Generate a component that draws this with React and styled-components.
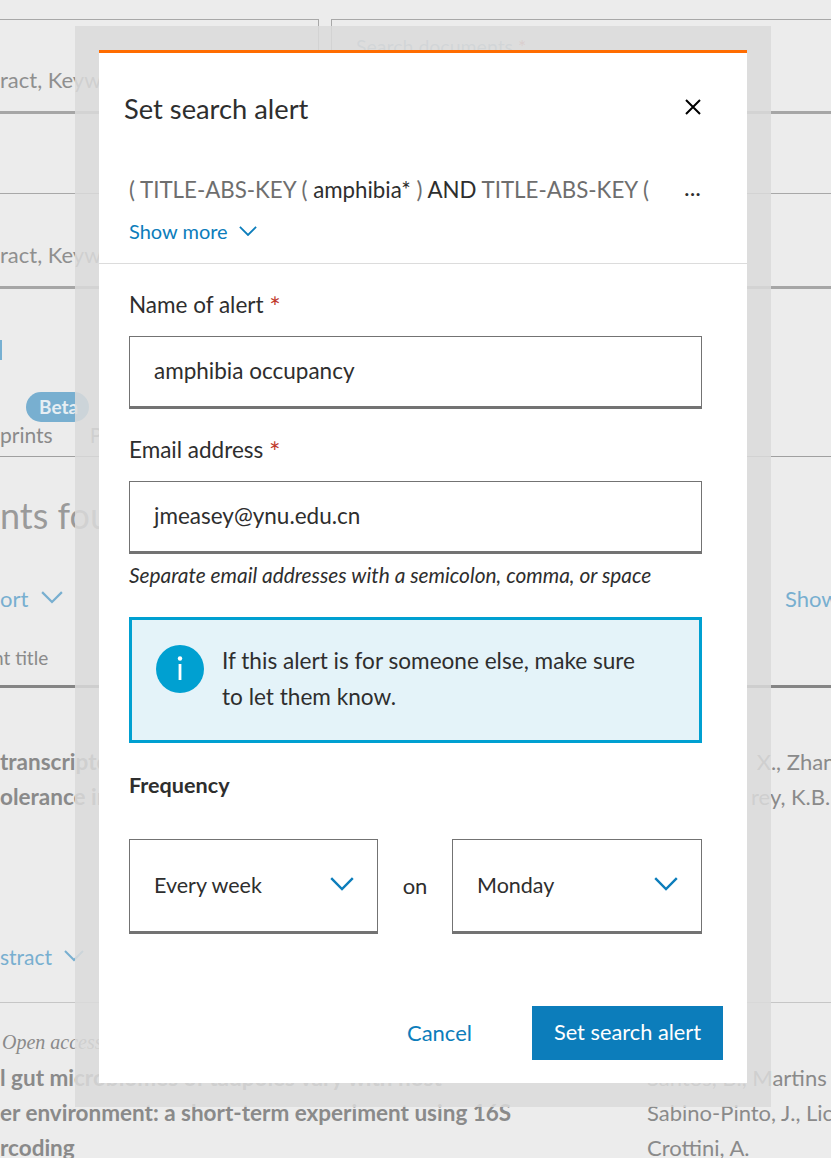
import React from 'react';
import styled, { createGlobalStyle } from 'styled-components';

const GlobalStyle = createGlobalStyle`
  html, body {
    margin: 0;
    padding: 0;
    background: #ececec;
  }
  * {
    box-sizing: border-box;
  }
`;

const Page = styled.div`
  position: relative;
  width: 831px;
  height: 1158px;
  overflow: hidden;
  background: #ececec;
  font-family: Lato, "Noto Sans", sans-serif;
  color: #8a8a8a;
`;

/* page behind the dialog */
const Background = styled.div`
  display: flex;
  flex-direction: column;
  padding-top: 19px;
`;

const SearchRow = styled.div`
  display: flex;
  gap: 12px;
  height: ${p => p.$height}px;
  margin-bottom: ${p => p.$after}px;
`;

const SearchField = styled.div`
  flex: ${p => (p.$wide ? '1' : '0 0 319px')};
  display: flex;
  flex-direction: column;
  justify-content: ${p => (p.$wide ? 'flex-start' : 'flex-end')};
  padding: ${p => (p.$wide ? '15px 0 0 24px' : '0 0 18px')};
  border-top: 1px solid #a8a8a8;
  border-bottom: 3px solid #a6a6a6;
  border-right: ${p => (p.$wide ? '0' : '1px solid #a8a8a8')};
  border-left: ${p => (p.$wide ? '1px solid #a8a8a8' : '0')};
  font-size: ${p => (p.$wide ? 19.5 : 22)}px;
  color: ${p => (p.$wide ? '#9fb6c4' : '#8f8f8f')};
  white-space: nowrap;
`;

const Required = styled.span`
  color: #d28a8a;
`;

const BlueStub = styled.div`
  width: 2px;
  height: 20px;
  margin-bottom: 32px;
  background: #77b0d2;
`;

const TabRow = styled.div`
  display: flex;
  height: 65px;
  border-bottom: 1px solid #a0a0a0;
  position: relative;
  padding: 30px 0 0;
  font-size: 21px;
  gap: 37px;
  margin-bottom: 34px;
`;

const BetaPill = styled.span`
  position: absolute;
  left: 26px;
  top: 0;
  width: 63px;
  height: 30px;
  border-radius: 15px;
  background: #78afd0;
  color: #e6eef3;
  font-size: 19px;
  font-weight: 700;
  line-height: 30px;
  padding-left: 13px;
`;

const ResultsHeading = styled.div`
  font-size: 36px;
  line-height: 48px;
  color: #9a9a9a;
  margin-bottom: 41px;
`;

const ActionRow = styled.div`
  display: flex;
  justify-content: space-between;
  align-items: center;
  height: 36px;
  font-size: 22px;
  color: #78afd0;
  margin-bottom: 25px;
`;

const ActionLink = styled.span`
  display: inline-flex;
  align-items: center;
  gap: 13px;
`;

const ShowLink = styled.span`
  width: 46px;
  overflow: hidden;
`;

const TableHead = styled.div`
  height: 47px;
  padding-top: 3px;
  border-bottom: 3px solid #858585;
  font-size: 19px;
  line-height: 28px;
  text-indent: -7px;
  margin-bottom: 56px;
`;

const ResultRow = styled.div`
  display: grid;
  grid-template-columns: ${p => p.$columns};
  line-height: 35px;
`;

const ResultTitle = styled.div`
  font-size: 22.5px;
  font-weight: 700;
  white-space: nowrap;
`;

const ResultAuthors = styled.div`
  font-size: 22px;
  white-space: nowrap;
`;

const AbstractLink = styled.div`
  display: flex;
  align-items: center;
  gap: 12px;
  height: 30px;
  margin-top: 127px;
  font-size: 21px;
  color: #78afd0;
`;

const ResultDivider = styled.div`
  height: 1px;
  margin: 31px 0 22px;
  background: #c6c6c6;
`;

const OpenAccess = styled.div`
  font-family: "Liberation Serif", serif;
  font-style: italic;
  font-size: 20px;
  line-height: 35px;
  padding-left: 2px;
`;

/* dialog */
const Frame = styled.div`
  position: absolute;
  left: 75px;
  top: 26px;
  width: 696px;
  height: 1081px;
  padding: 24px;
  background: rgba(218, 218, 218, 0.85);
`;

const Modal = styled.div`
  height: 1033px;
  display: flex;
  flex-direction: column;
  background: #fff;
  border-top: 3px solid #ff6c00;
  color: #2e2e2e;
`;

const ModalHeader = styled.div`
  display: flex;
  justify-content: space-between;
  align-items: flex-start;
  padding: 38px 46px 0 25px;
  height: 119px;
`;

const Title = styled.h2`
  margin: 0;
  font-size: 27.3px;
  line-height: 36px;
  font-weight: 400;
`;

const CloseButton = styled.button`
  display: flex;
  width: 16px;
  height: 16px;
  margin-top: 8px;
  padding: 0;
  border: 0;
  background: none;
`;

const QueryBlock = styled.div`
  height: 92px;
  padding: 0 46px 0 30px;
  border-bottom: 1px solid #dcdcdc;
`;

const QueryLine = styled.div`
  display: flex;
  justify-content: space-between;
  font-size: 22.3px;
  line-height: 36px;
  white-space: nowrap;
`;

const Muted = styled.span`
  color: #6e6e6e;
`;

const Ellipsis = styled.span`
  font-size: 24px;
  line-height: 30px;
`;

const ShowMore = styled.div`
  display: flex;
  align-items: center;
  gap: 11px;
  margin-top: 8px;
  font-size: 20px;
  line-height: 30px;
  color: #0c7dbb;
`;

const Form = styled.div`
  flex: 1;
  display: flex;
  flex-direction: column;
  padding: 23px 45px 0 30px;
`;

const Label = styled.div`
  font-size: 22.5px;
  line-height: 36px;
  margin-bottom: 13px;
`;

const Star = styled.span`
  font-size: 27px;
  line-height: 0;
  vertical-align: -4px;
  color: #c0392b;
`;

const TextField = styled.div`
  height: 73px;
  margin-bottom: 23px;
  padding: 0 0 2px 24px;
  display: flex;
  align-items: center;
  border: 1px solid #737373;
  border-bottom-width: 3px;
  font-size: 22.5px;
`;

const Hint = styled.div`
  font-size: 20.9px;
  font-style: italic;
  line-height: 24px;
  margin-top: -14px;
`;

const InfoBox = styled.div`
  height: 126px;
  margin-top: 30px;
  padding: 25px 24px 0;
  display: flex;
  gap: 18px;
  background: #e4f3f9;
  border: 3px solid #00a0d1;
`;

const InfoIcon = styled.svg`
  flex: none;
  width: 48px;
  height: 48px;
`;

const InfoText = styled.div`
  font-size: 22.6px;
  line-height: 36px;
  margin-top: -2px;
`;

const SectionLabel = styled.div`
  margin-top: 26px;
  font-size: 21.6px;
  font-weight: 700;
  line-height: 32px;
`;

const SelectRow = styled.div`
  display: flex;
  align-items: center;
  margin-top: 38px;
`;

const Select = styled.div`
  width: ${p => p.$width}px;
  height: 95px;
  display: flex;
  justify-content: space-between;
  align-items: center;
  padding: 0 23px 2px 24px;
  border: 1px solid #737373;
  border-bottom-width: 3px;
  font-size: 21.5px;
`;

const OnLabel = styled.span`
  width: 74px;
  padding-bottom: 2px;
  text-align: center;
  font-size: 22px;
`;

const Footer = styled.div`
  display: flex;
  justify-content: flex-end;
  align-items: center;
  gap: 60px;
  padding: 0 24px 23px 0;
`;

const CancelLink = styled.span`
  padding-bottom: 2px;
  font-size: 22px;
  color: #0c7dbb;
`;

const PrimaryButton = styled.button`
  width: 191px;
  height: 54px;
  padding: 0 0 3px;
  border: 0;
  background: #0c7dbb;
  color: #fff;
  font-family: inherit;
  font-size: 21.8px;
`;

const Chevron = ({ width = 20, color = '#0c7dbb' }) => (
  <svg width={width} height={width * 0.6} viewBox="0 0 20 12" fill="none" stroke={color} strokeWidth="2">
    <path d="M1 1l9 9 9-9" />
  </svg>
);

const App = () => (
  <Page>
    <GlobalStyle />
    <Background>
      <SearchRow $height={95} $after={79}>
        <SearchField>ract, Keywords</SearchField>
        <SearchField $wide>
          <span>Search documents <Required>*</Required></span>
        </SearchField>
      </SearchRow>
      <SearchRow $height={96} $after={51}>
        <SearchField>ract, Keywords</SearchField>
        <SearchField $wide />
      </SearchRow>
      <BlueStub />
      <TabRow>
        <BetaPill>Beta</BetaPill>
        <span>prints</span>
        <span>Patents</span>
      </TabRow>
      <ResultsHeading>nts found</ResultsHeading>
      <ActionRow>
        <ActionLink>
          ort <Chevron width={22} color="#78afd0" />
        </ActionLink>
        <ShowLink>Show</ShowLink>
      </ActionRow>
      <TableHead>nt title</TableHead>
      <ResultRow $columns="751px 1fr">
        <ResultTitle>transcriptome</ResultTitle>
        <ResultAuthors>&nbsp;X., Zhang</ResultAuthors>
        <ResultTitle>olerance in</ResultTitle>
        <ResultAuthors>rey, K.B.</ResultAuthors>
      </ResultRow>
      <AbstractLink>
        stract <Chevron width={20} color="#78afd0" />
      </AbstractLink>
      <ResultDivider />
      <OpenAccess>Open access</OpenAccess>
      <ResultRow $columns="647px 1fr">
        <ResultTitle>l gut microbiomes of tadpoles vary with host</ResultTitle>
        <ResultAuthors>Santos, B., Martins</ResultAuthors>
        <ResultTitle>er environment: a short-term experiment using 16S</ResultTitle>
        <ResultAuthors>Sabino-Pinto, J., Lic</ResultAuthors>
        <ResultTitle>rcoding</ResultTitle>
        <ResultAuthors>Crottini, A.</ResultAuthors>
      </ResultRow>
    </Background>

    <Frame>
      <Modal>
        <ModalHeader>
          <Title>Set search alert</Title>
          <CloseButton aria-label="Close">
            <svg width="16" height="16" viewBox="0 0 16 16" fill="none" stroke="#000" strokeWidth="2">
              <path d="M1 1l14 14M15 1L1 15" />
            </svg>
          </CloseButton>
        </ModalHeader>
        <QueryBlock>
          <QueryLine>
            <span>
              <Muted>( TITLE-ABS-KEY ( </Muted>amphibia* <Muted>)</Muted> AND <Muted>TITLE-ABS-KEY (</Muted>
            </span>
            <Ellipsis>...</Ellipsis>
          </QueryLine>
          <ShowMore>
            Show more <Chevron width={18} />
          </ShowMore>
        </QueryBlock>
        <Form>
          <Label>Name of alert <Star>*</Star></Label>
          <TextField>amphibia occupancy</TextField>
          <Label>Email address <Star>*</Star></Label>
          <TextField>jmeasey@ynu.edu.cn</TextField>
          <Hint>Separate email addresses with a semicolon, comma, or space</Hint>
          <InfoBox>
            <InfoIcon viewBox="0 0 48 48">
              <circle cx="24" cy="24" r="24" fill="#00a0d1" />
              <circle cx="24" cy="13.5" r="2.2" fill="#fff" />
              <rect x="22.6" y="19" width="2.8" height="16" fill="#fff" />
            </InfoIcon>
            <InfoText>
              If this alert is for someone else, make sure
              <br />
              to let them know.
            </InfoText>
          </InfoBox>
          <SectionLabel>Frequency</SectionLabel>
          <SelectRow>
            <Select $width={249}>
              Every week <Chevron width={24} />
            </Select>
            <OnLabel>on</OnLabel>
            <Select $width={250}>
              Monday <Chevron width={24} />
            </Select>
          </SelectRow>
        </Form>
        <Footer>
          <CancelLink>Cancel</CancelLink>
          <PrimaryButton>Set search alert</PrimaryButton>
        </Footer>
      </Modal>
    </Frame>
  </Page>
);

export default App;
